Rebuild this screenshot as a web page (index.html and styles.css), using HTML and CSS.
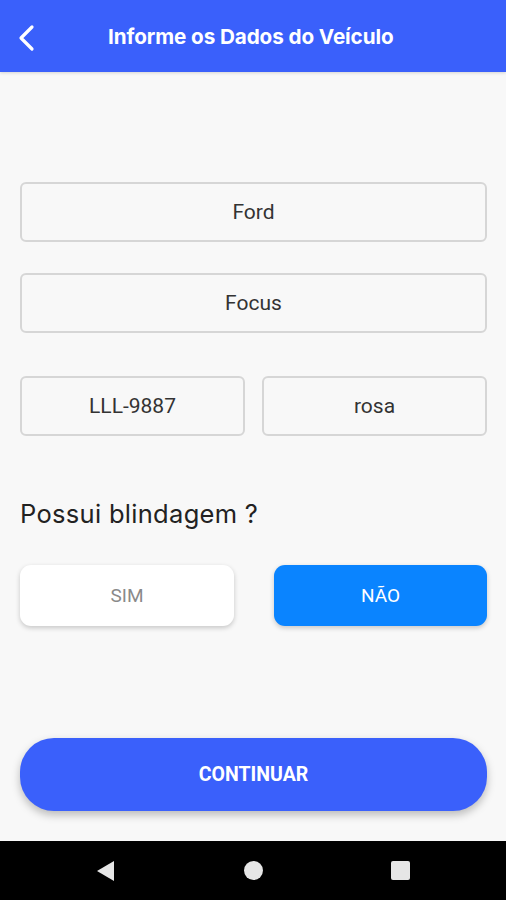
FILE: index.html
```html
<!DOCTYPE html>
<html lang="pt-BR">
<head>
    <meta charset="UTF-8">
    <meta name="viewport" content="width=device-width, initial-scale=1.0">
    <title>Informe os Dados do Veículo</title>
    <link rel="stylesheet" href="styles.css">
</head>
<body>
    <div class="screen">
        <!-- Top bar -->
        <header class="topbar">
            <button class="back" type="button" aria-label="Voltar">
                <svg width="20" height="28" viewBox="0 0 20 28">
                    <path d="M16 3 L5 14 L16 25" fill="none" stroke="#fff" stroke-width="3.2" stroke-linecap="round" stroke-linejoin="round"/>
                </svg>
            </button>
            <h1 class="title">Informe os Dados do Veículo</h1>
        </header>

        <main class="content">
            <form class="vehicle-form">
                <input class="field" type="text" value="Ford">
                <input class="field" type="text" value="Focus">
                <div class="field-row">
                    <input class="field" type="text" value="LLL-9887">
                    <input class="field" type="text" value="rosa">
                </div>
            </form>

            <p class="question">Possui blindagem ?</p>
            <div class="choice-row">
                <button class="choice" type="button">SIM</button>
                <button class="choice active" type="button">NÃO</button>
            </div>

            <button class="continue" type="button">CONTINUAR</button>
        </main>

        <!-- Android nav bar -->
        <nav class="navbar">
            <svg width="20" height="22" viewBox="0 0 20 22"><path d="M18 1 L18 21 L1 11 Z" fill="#e6e6e6"/></svg>
            <span class="nav-home"></span>
            <span class="nav-recent"></span>
        </nav>
    </div>
</body>
</html>
```

FILE: styles.css
```css
* {
    box-sizing: border-box;
}

body {
    margin: 0;
    font-family: 'Roboto', 'Liberation Sans', sans-serif;
    background-color: #f8f8f8;
}

.screen {
    display: flex;
    flex-direction: column;
    height: 900px;
}

.topbar {
    height: 72px;
    background-color: #3a60fb;
    display: flex;
    align-items: center;
    padding: 0 0 0 16px;
    box-shadow: 0 1px 3px rgba(0, 0, 0, 0.15);
}

.back {
    background: none;
    border: none;
    padding: 0;
    width: 28px;
    height: 28px;
    display: flex;
    align-items: center;
    margin-top: 4px;
}

.title {
    margin: 0 0 0 64px;
    color: #fff;
    font-family: 'Inter', 'Roboto', sans-serif;
    font-size: 20.7px;
    font-weight: 700;
    letter-spacing: -0.1px;
}

.content {
    flex: 1;
    padding: 110px 19px 30px 20px;
    display: flex;
    flex-direction: column;
}

.vehicle-form {
    display: flex;
    flex-direction: column;
    gap: 31px;
    margin: 0;
}

.vehicle-form .field-row {
    display: flex;
    gap: 17px;
    margin-top: 12px;
}

.field {
    width: 100%;
    height: 60px;
    border: 2px solid #d6d6d6;
    border-radius: 6px;
    background-color: #f8f8f8;
    text-align: center;
    font-family: 'Roboto', sans-serif;
    font-size: 21px;
    color: #333;
    outline: none;
}

.question {
    margin: 62px 0 0 0;
    font-family: 'Inter', sans-serif;
    font-size: 25.5px;
    font-weight: 400;
    color: #222;
    letter-spacing: 0.3px;
}

.choice-row {
    display: flex;
    justify-content: space-between;
    margin-top: 36px;
}

.choice {
    width: 214px;
    height: 61px;
    border: none;
    border-radius: 11px;
    background-color: #fff;
    color: #8a8a8a;
    font-family: 'Roboto', sans-serif;
    font-size: 19px;
    box-shadow: 0 2px 5px rgba(0, 0, 0, 0.2);
}

.choice.active {
    width: 213px;
    background-color: #0a84ff;
    color: #fff;
}

.continue {
    margin-top: auto;
    height: 73px;
    border: none;
    border-radius: 34px;
    background-color: #3a60fb;
    color: #fff;
    font-family: 'Roboto', sans-serif;
    font-weight: 700;
    font-size: 19.5px;
    padding-right: 6px;
    box-shadow: 0 4px 8px rgba(0, 0, 0, 0.25);
}

.navbar {
    height: 59px;
    background-color: #000;
    display: flex;
    align-items: center;
    justify-content: space-between;
    padding: 0 96px 0 96px;
}

.nav-home {
    width: 19px;
    height: 19px;
    border-radius: 50%;
    background-color: #e6e6e6;
}

.nav-recent {
    width: 19px;
    height: 19px;
    border-radius: 2px;
    background-color: #e6e6e6;
}
```
